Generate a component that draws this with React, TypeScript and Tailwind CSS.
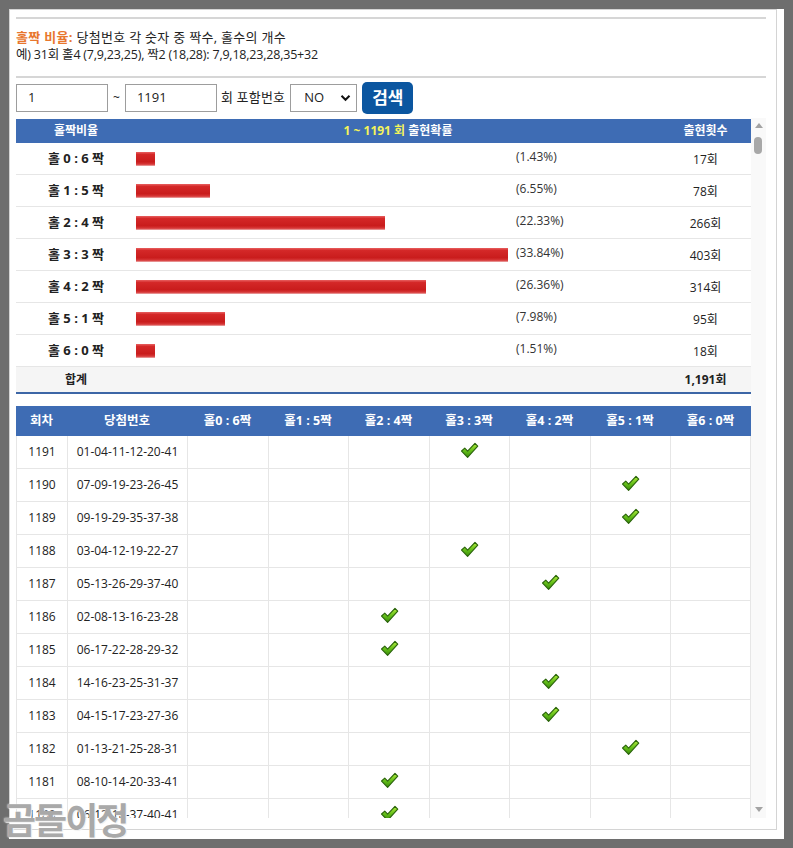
import React from "react";

const bars = [
  { label: "홀 0 : 6 짝", w: "w-[19px]", pct: "(1.43%)", cnt: "17회" },
  { label: "홀 1 : 5 짝", w: "w-[74px]", pct: "(6.55%)", cnt: "78회" },
  { label: "홀 2 : 4 짝", w: "w-[249px]", pct: "(22.33%)", cnt: "266회" },
  { label: "홀 3 : 3 짝", w: "w-[372px]", pct: "(33.84%)", cnt: "403회" },
  { label: "홀 4 : 2 짝", w: "w-[290px]", pct: "(26.36%)", cnt: "314회" },
  { label: "홀 5 : 1 짝", w: "w-[89px]", pct: "(7.98%)", cnt: "95회" },
  { label: "홀 6 : 0 짝", w: "w-[19px]", pct: "(1.51%)", cnt: "18회" },
];

const draws: [string, string, number][] = [
  ["1191", "01-04-11-12-20-41", 3],
  ["1190", "07-09-19-23-26-45", 5],
  ["1189", "09-19-29-35-37-38", 5],
  ["1188", "03-04-12-19-22-27", 3],
  ["1187", "05-13-26-29-37-40", 4],
  ["1186", "02-08-13-16-23-28", 2],
  ["1185", "06-17-22-28-29-32", 2],
  ["1184", "14-16-23-25-31-37", 4],
  ["1183", "04-15-17-23-27-36", 4],
  ["1182", "01-13-21-25-28-31", 5],
  ["1181", "08-10-14-20-33-41", 2],
  ["1180", "06-12-18-37-40-41", 2],
];

const heads = ["홀0 : 6짝", "홀1 : 5짝", "홀2 : 4짝", "홀3 : 3짝", "홀4 : 2짝", "홀5 : 1짝", "홀6 : 0짝"];
const colW = ["w-[81px]", "w-[80px]", "w-[81px]", "w-[80px]", "w-[81px]", "w-[80px]", "w-[81px]"];

function Check() {
  return (
    <svg width="19" height="17" viewBox="0 0 18 16">
      <defs>
        <linearGradient id="cg" x1="0" y1="0" x2="0" y2="1">
          <stop offset="0" stopColor="#b2ec3c" />
          <stop offset="0.55" stopColor="#62be18" />
          <stop offset="1" stopColor="#3a8c0a" />
        </linearGradient>
      </defs>
      <polygon
        points="1.5,8.5 4.5,5.8 7.2,8.6 14.2,1.2 16.8,3.8 7.2,14.5"
        fill="url(#cg)"
        stroke="#2a640a"
        strokeWidth="1.1"
        strokeLinejoin="round"
      />
    </svg>
  );
}

export default function App() {
  return (
    <div className="relative h-[848px] w-[793px] bg-[#6e6e6e] pl-[9px] pt-[9px] font-['Open_Sans','Noto_Sans_CJK_KR',sans-serif] text-[12px] text-[#222]">
      <div className="h-[830px] w-[775px] bg-white">
        <div className="h-[821px] w-[768px] border border-[#d4d4d4] pl-[6px] pt-[7px]">
          <div className="h-[2px] w-[750px] bg-[#d6d6d6]" />
          <div className="mt-[10px] leading-[17px]">
            <div className="text-[13px] tracking-[0.3px]">
              <span className="font-bold text-[#e8772e]">홀짝 비율:</span> 당첨번호 각 숫자 중 짝수, 홀수의 개수
            </div>
            <div className="text-[12.5px] tracking-[-0.2px]">예) 31회 홀4 (7,9,23,25), 짝2 (18,28): 7,9,18,23,28,35+32</div>
          </div>
          <div className="mt-[13px] h-[2px] w-[750px] bg-[#d6d6d6]" />
          <div className="mt-[4px] flex h-[32px] items-center text-[13px]">
            <div className="flex h-[28px] w-[92px] items-center border border-[#9d9d9d] pl-[11px]">1</div>
            <span className="ml-[5px] mr-[5px] text-[12px]">~</span>
            <div className="flex h-[28px] w-[92px] items-center border border-[#9d9d9d] pl-[11px]">1191</div>
            <span className="ml-[4px] text-[13px] tracking-[0.2px]">회 포함번호</span>
            <div className="ml-[5px] flex h-[28px] w-[67px] items-center justify-between border border-[#9d9d9d] pl-[13px] pr-[5px]">
              <span>NO</span>
              <svg width="11" height="8" viewBox="0 0 11 8">
                <path d="M1.5 1.8 L5.5 5.8 L9.5 1.8" fill="none" stroke="#111" strokeWidth="2" />
              </svg>
            </div>
            <button className="ml-[5px] flex h-[32px] w-[51px] items-center justify-center rounded-[5px] bg-[#0b56a0] text-[17px] font-bold text-white">
              검색
            </button>
          </div>

          <div className="mt-[4px] flex h-[700px] w-[750px] overflow-hidden">
            <div className="w-[735px] pt-[1px]">
              <div className="flex h-[24px] items-center bg-[#3e6cb4] font-bold text-white">
                <div className="w-[120px] text-center">홀짝비율</div>
                <div className="w-[524px] text-center">
                  <span className="text-[#f4f45a]">1 ~ 1191 회</span> 출현확률
                </div>
                <div className="w-[91px] text-center">출현횟수</div>
              </div>
              {bars.map((b) => (
                <div key={b.label} className="flex h-[32px] items-center border-b border-[#e6e6e6]">
                  <div className="w-[120px] text-center text-[13px] font-bold">{b.label}</div>
                  <div className="flex w-[524px] items-center">
                    <div className="w-[380px]">
                      <div
                        className={`${b.w} h-[14px] bg-[linear-gradient(to_bottom,#e86060_0%,#d42828_18%,#c91c1c_70%,#d83a3a_88%,#ecb0b0_100%)]`}
                      />
                    </div>
                    <div className="-mt-[4px] text-[12px] text-[#333]">{b.pct}</div>
                  </div>
                  <div className="mt-[3px] w-[91px] text-center">{b.cnt}</div>
                </div>
              ))}
              <div className="flex h-[27px] items-center border-b-2 border-[#3d66a6] bg-[#f5f5f5] font-bold">
                <div className="w-[120px] text-center">합계</div>
                <div className="w-[524px]" />
                <div className="w-[91px] text-center">1,191회</div>
              </div>

              <div className="mt-[12px] flex h-[30px] items-center bg-[#3e6cb4] text-[12.5px] font-bold text-white">
                <div className="w-[51px] text-center">회차</div>
                <div className="w-[120px] text-center">당첨번호</div>
                {heads.map((h, i) => (
                  <div key={h} className={`${colW[i]} text-center`}>
                    {h}
                  </div>
                ))}
              </div>
              {draws.map(([no, nums, col]) => (
                <div key={no} className="flex h-[33px] border-b border-[#e6e6e6]">
                  <div className="flex w-[51px] items-center justify-center border-l border-[#e6e6e6]">{no}</div>
                  <div className="flex w-[120px] items-center justify-center border-l border-[#e6e6e6]">{nums}</div>
                  {colW.map((w, i) => (
                    <div
                      key={i}
                      className={`${w} flex items-center justify-center border-l border-[#e6e6e6] pb-[4px] ${i === 6 ? "border-r" : ""}`}
                    >
                      {i === col ? <Check /> : null}
                    </div>
                  ))}
                </div>
              ))}
            </div>
            <div className="relative w-[15px] bg-[#f9f9f9]">
              <div className="absolute left-[4px] top-[5px] h-0 w-0 border-x-[4px] border-b-[5px] border-x-transparent border-b-[#a3a3a3]" />
              <div className="absolute left-[3px] top-[19px] h-[17px] w-[8px] rounded-full bg-[#a8a8a8]" />
              <div className="absolute bottom-[6px] left-[4px] h-0 w-0 border-x-[4px] border-t-[5px] border-x-transparent border-t-[#a3a3a3]" />
            </div>
          </div>
        </div>
      </div>
      <div className="absolute left-[3px] top-[794px] font-['Noto_Sans_CJK_KR',sans-serif] text-[36px] font-bold leading-[48px] tracking-[-2px] text-[#a9a9a9] [text-shadow:0_0_2px_#ffffff,1px_1px_1px_#eeeeee]">
        곰돌이정
      </div>
    </div>
  );
}
